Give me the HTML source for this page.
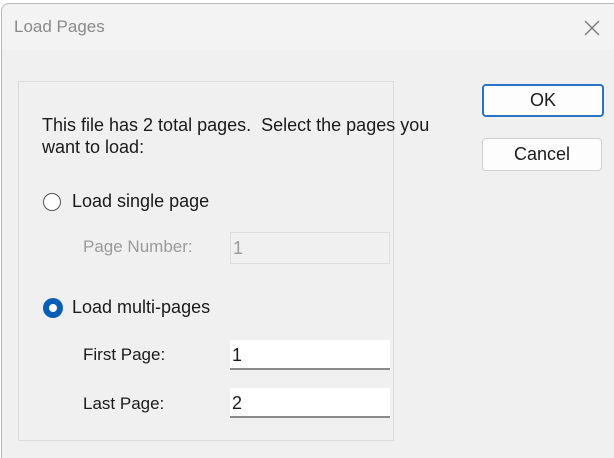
<!DOCTYPE html><html><head><style>
html,body{margin:0;width:614px;height:458px;overflow:hidden;}
body{background:#fff;position:relative;font-family:"Liberation Sans",sans-serif;}
.win{position:absolute;left:1px;top:3px;width:620px;height:470px;background:#f0f0f0;border:1px solid #b8b8b8;border-radius:8px 8px 0 0;}
.tb{position:absolute;left:0;top:0;right:0;height:45px;background:#f3f3f3;border-radius:8px 8px 0 0;}
.a{position:absolute;font-size:18px;color:#1a1a1a;white-space:nowrap;}
.g{position:absolute;left:16px;top:77px;width:374px;height:358px;border:1px solid #dcdcdc;}
.btn{position:absolute;left:480px;width:118px;height:31px;background:#fdfdfd;border:1px solid #d0d0d0;border-radius:4px;font-size:18px;text-align:center;line-height:31px;color:#1a1a1a;}
.inp{position:absolute;left:228px;width:160px;height:30px;background:#fff;border-bottom:2px solid #8a8a8a;font-size:18px;line-height:30px;padding-left:2px;box-sizing:border-box;color:#1a1a1a;}
</style></head><body>
<div class="win">
<div class="tb"></div>
<div class="a" style="left:12px;top:13px;color:#8a8a8a;font-size:17px">Load Pages</div>
<svg style="position:absolute;left:582px;top:16px" width="16" height="16"><path d="M1 1L15 15M15 1L1 15" stroke="#777" stroke-width="1.3"/></svg>
<div class="g"></div>
<div class="btn" style="top:80px;border:2px solid #2a73c6;height:29px;line-height:29px">OK</div>
<div class="btn" style="top:134px">Cancel</div>
<div class="a" style="left:40px;top:110px;line-height:22px">This file has 2 total pages.&nbsp; Select the pages you<br>want to load:</div>
<div style="position:absolute;left:41px;top:189px;width:16px;height:16px;border:1.5px solid #555;border-radius:50%;background:#fff"></div>
<div class="a" style="left:70px;top:187px">Load single page</div>
<div class="a" style="left:81px;top:233px;color:#9a9a9a;font-size:17px">Page Number:</div>
<div class="inp" style="top:228px;background:#f0f0f0;border:1px solid #dedede;color:#9a9a9a;height:32px">1</div>
<div style="position:absolute;left:41px;top:294px;width:20px;height:20px;border-radius:50%;background:#0a5fb4"></div>
<div style="position:absolute;left:47px;top:300px;width:8px;height:8px;border-radius:50%;background:#fff"></div>
<div class="a" style="left:70px;top:293px">Load multi-pages</div>
<div class="a" style="left:81px;top:341px;font-size:17px">First Page:</div>
<div class="inp" style="top:336px">1</div>
<div class="a" style="left:81px;top:390px;font-size:17px">Last Page:</div>
<div class="inp" style="top:384px">2</div>
</div>
</body></html>
